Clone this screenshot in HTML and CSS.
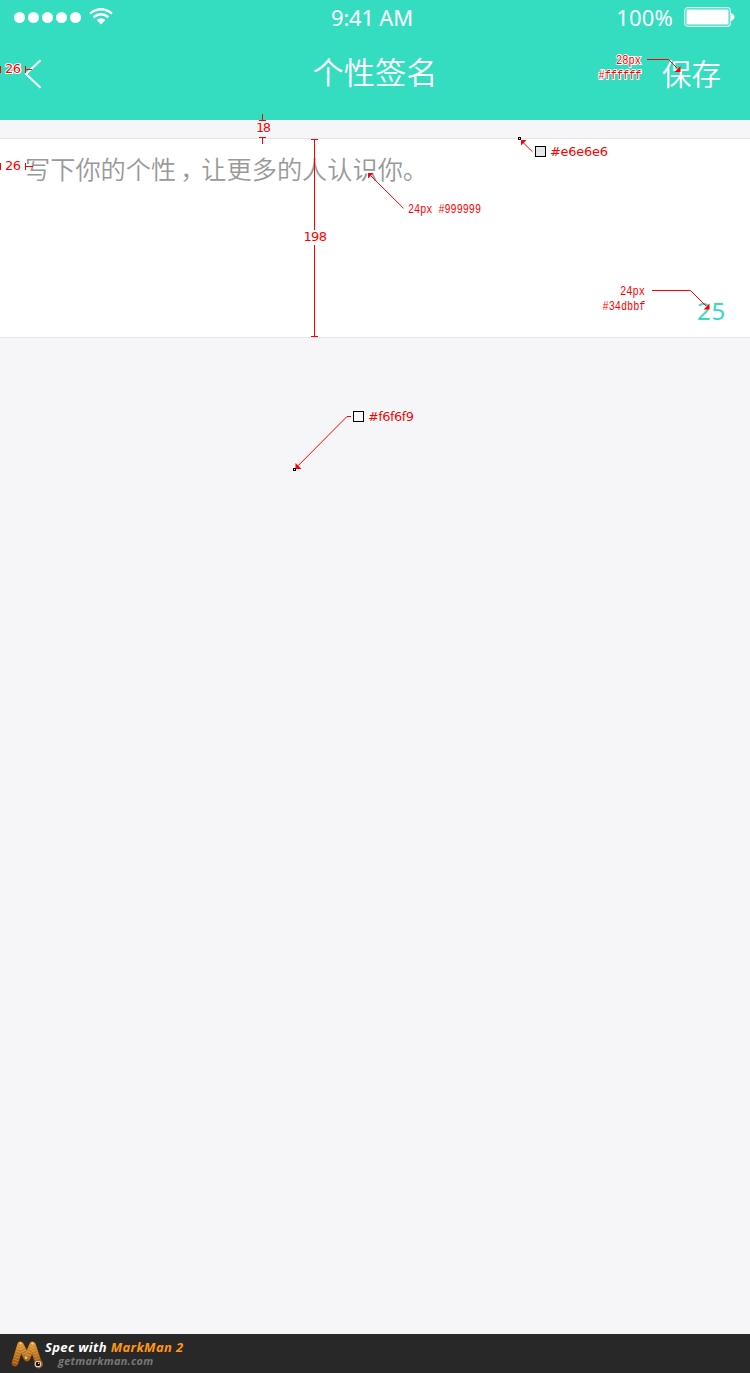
FILE: index.html
```html
<!DOCTYPE html>
<html lang="zh-CN">
<head>
<meta charset="utf-8">
<title>个性签名</title>
<link rel="stylesheet" href="styles.css">
</head>
<body>
<div class="page">
  <header class="header">
    <div class="status">
      <div class="signal">
        <i class="dot"></i><i class="dot"></i><i class="dot"></i><i class="dot"></i><i class="dot"></i>
        <svg class="wifi" width="24" height="17" viewBox="0 0 24 17" fill="none" stroke="#fff" stroke-width="2.4">
          <path d="M1 5.6Q12-3 23 5.6"/><path d="M4.5 9.3Q12 3.3 19.5 9.3"/>
          <path d="M7.6 12Q12 8.4 16.4 12L12 16.4Z" fill="#fff" stroke="none"/>
        </svg>
      </div>
      <div class="time">9:41 AM</div>
      <div class="power"><span>100%</span>
        <svg width="51" height="20" viewBox="0 0 51 20">
          <rect x=".7" y=".7" width="45.6" height="18.6" rx="3" fill="none" stroke="#fff" stroke-opacity=".8" stroke-width="1.2"/>
          <rect x="2.5" y="2.5" width="42" height="15" rx="1" fill="#fff"/>
          <path d="M47 6Q50.5 7.5 50.5 10Q50.5 12.500 47 14Z" fill="#fff"/>
        </svg>
      </div>
    </div>
    <nav class="nav">
      <svg class="back" width="18" height="30" viewBox="0 0 18 30" fill="none" stroke="#fff" stroke-width="2"><path d="M16.500 1.300L2 15L16.500 28.700"/></svg>
      <h1 class="title">个性签名</h1>
      <div class="save">保存</div>
    </nav>
  </header>
  <main class="content">
    <section class="editor">
      <p class="placeholder">写下你的个性<span class="comma">，</span>让更多的人认识你。</p>
      <p class="count">25</p>
    </section>
  </main>
  <footer class="footer">
    <svg class="logo" width="34" height="32" viewBox="0 0 34 32">
      <defs>
        <linearGradient id="amber" x1="0" y1="0" x2="0" y2="1">
          <stop offset="0" stop-color="#d8912f"/><stop offset="1" stop-color="#9c5812"/>
        </linearGradient>
      </defs>
      <g fill="none" stroke-linecap="round" stroke-linejoin="round">
        <path d="M5 25L10.500 7L17 20L22.500 7L28.500 25" stroke="#4a2407" stroke-width="7.600"/>
        <path d="M5 25L10.500 7L17 20L22.500 7L28.500 25" stroke="url(#amber)" stroke-width="6.600"/>
        <path d="M5 25L10.500 7L17 20L22.500 7L28.500 25" stroke="#e9b066" stroke-opacity=".6" stroke-width="5" stroke-dasharray=".8 2" stroke-linecap="butt"/>
      </g>
      <circle cx="10.500" cy="5.500" r="1" fill="#ffe391"/><circle cx="22.500" cy="5.500" r="1" fill="#ffe391"/><circle cx="16" cy="20" r="1" fill="#ffe391"/>
      <circle cx="28.500" cy="26" r="4.400" fill="#a96524"/><circle cx="28" cy="26" r="3.100" fill="#eee"/><circle cx="28" cy="26" r="2.300" fill="#111"/><circle cx="28.700" cy="25.300" r=".7" fill="#fff"/>
    </svg>
    <div class="credit">
      <div class="spec">Spec with <span>MarkMan 2</span></div>
      <div class="site">getmarkman.com</div>
    </div>
  </footer>
  <svg class="notes" width="750" height="500" viewBox="0 0 750 500">
    <g class="lines">
      <path d="M.5 66v7M25.500 66v7M26 69.500h6M.5 163v7M25.500 163v7M26 166.500h7"/>
      <path d="M262.500 114v6M259 120.500h7M259 137.500h7M262.500 138v6"/>
      <path d="M311 139.500h7M314.500 140v90M314.500 245v91M311 336.500h7"/>
      <path d="M647 59.500h21.500L677 68M652 290.500h38.500L706 306"/>
    </g>
    <g class="leaders"><path d="M371 176L403.500 208.300M522 141.500L532.500 151.800M351 416.500h-4L298 465.800"/></g>
    <path class="tip" d="M680.500 72v-6l-6 6zM709.500 309.500v-6l-6 6zM368 173h5.500l-5.500 5.500zM521 140h5.500l-5.500 5.500zM295.500 469v-6l6 6z"/>
    <g class="swatches">
      <rect x="535.500" y="146.500" width="10" height="10" fill="#e6e6e6"/>
      <rect x="353.500" y="411.500" width="10" height="10" fill="#f6f6f9"/>
      <rect x="518.500" y="137.500" width="2" height="2" fill="#e6e6e6"/>
      <rect x="293.500" y="468.500" width="2" height="2" fill="#f6f6f9"/>
    </g>
    <g class="measure">
      <text x="5" y="73" textLength="16">26</text>
      <text x="5" y="170" textLength="16">26</text>
      <text x="256" y="132" textLength="15">18</text>
      <text x="303.500" y="241" textLength="23.500">198</text>
      <text x="550" y="156" textLength="58">#e6e6e6</text>
      <text x="368" y="421" textLength="46">#f6f6f9</text>
    </g>
    <g class="mono">
      <text x="616" y="64" textLength="25" lengthAdjust="spacingAndGlyphs">28px</text>
      <text x="598.500" y="79" textLength="43" lengthAdjust="spacingAndGlyphs">#ffffff</text>
      <text x="408" y="213" textLength="73" lengthAdjust="spacingAndGlyphs">24px #999999</text>
      <text x="620" y="295" textLength="25" lengthAdjust="spacingAndGlyphs">24px</text>
      <text x="602.500" y="310" textLength="43" lengthAdjust="spacingAndGlyphs">#34dbbf</text>
    </g>
  </svg>
</div>
</body>
</html>
```

FILE: styles.css
```css
* { box-sizing: border-box; }
body { margin: 0; font-family: "Noto Sans", "Noto Sans CJK SC", sans-serif; }
.page {
  position: relative;
  display: flex;
  flex-direction: column;
  width: 750px;
  height: 1373px;
  background: #f6f6f9;
}
.header { height: 120px; background: #34ddc0; color: #fff; }
.status {
  display: grid;
  grid-template-columns: 1fr auto 1fr;
  align-items: center;
  height: 34px;
  padding: 0 15px 0 14px;
  font: 400 22px/34px "Noto Sans", sans-serif;
}
.signal { display: flex; align-items: center; gap: 3px; }
.dot { width: 11px; height: 11px; border-radius: 50%; background: #fff; }
.wifi { margin: -2px 0 0 5px; }
.time { margin-right: 5px; letter-spacing: -.2px; }
.power { display: flex; align-items: center; justify-content: flex-end; gap: 11px; letter-spacing: .2px; }
.nav {
  display: grid;
  grid-template-columns: 1fr auto 1fr;
  align-items: center;
  height: 76px;
  padding: 0 29px 0 24px;
  font-family: "Noto Sans CJK SC", sans-serif;
}
.back { margin-top: 4px; }
.title { margin: -2px 0 0 5px; font-size: 31.200px; line-height: 40px; font-weight: 350; }
.save { justify-self: end; margin-top: -1px; font-size: 29.500px; line-height: 40px; font-weight: 350; }
.content { flex: 1; padding-top: 18px; }
.editor {
  display: flex;
  flex-direction: column;
  justify-content: space-between;
  height: 200px;
  padding: 11px 24px 8px 25px;
  border-top: 1px solid #e6e6e6;
  border-bottom: 1px solid #e6e6e6;
  background: #fff;
}
.placeholder {
  height: 36px;
  margin: 0;
  color: #999;
  font: 350 25.200px/36px "Noto Sans CJK SC", sans-serif;
}
.comma { display: inline-block; width: 25.200px; text-indent: 4px; white-space: nowrap; }
.count {
  margin: 0;
  text-align: right;
  color: #34dbbf;
  font: 400 24px/36px "Noto Sans", sans-serif;
  letter-spacing: .8px;
}
.footer { display: flex; height: 39px; padding: 4px 10px; background: #282828; }
.credit {
  padding: 2px 0 0 1px;
  font-family: "Open Sans", sans-serif;
  font-style: italic;
  font-weight: 700;
  white-space: nowrap;
}
.spec { font-size: 13px; line-height: 15px; letter-spacing: .35px; color: #fff; }
.spec span { color: #ff9614; }
.site { padding-left: 13px; font-size: 11px; line-height: 11px; letter-spacing: .25px; color: #777; }
.notes { position: absolute; top: 0; left: 0; }
.lines path { fill: none; stroke: #f00; stroke-width: 1; }
.leaders path { fill: none; stroke: #f00; stroke-width: 1; }
.tip { fill: #f00; }
.swatches rect { stroke: #000; stroke-width: 1; }
.measure text {
  font: 13px "DejaVu Sans", sans-serif;
  fill: #f00;
  stroke: #fff;
  stroke-width: 2px;
  paint-order: stroke;
}
.mono text {
  font: 12px "Liberation Mono", monospace;
  fill: #f00;
  stroke: #fff;
  stroke-width: 2px;
  paint-order: stroke;
}
```
